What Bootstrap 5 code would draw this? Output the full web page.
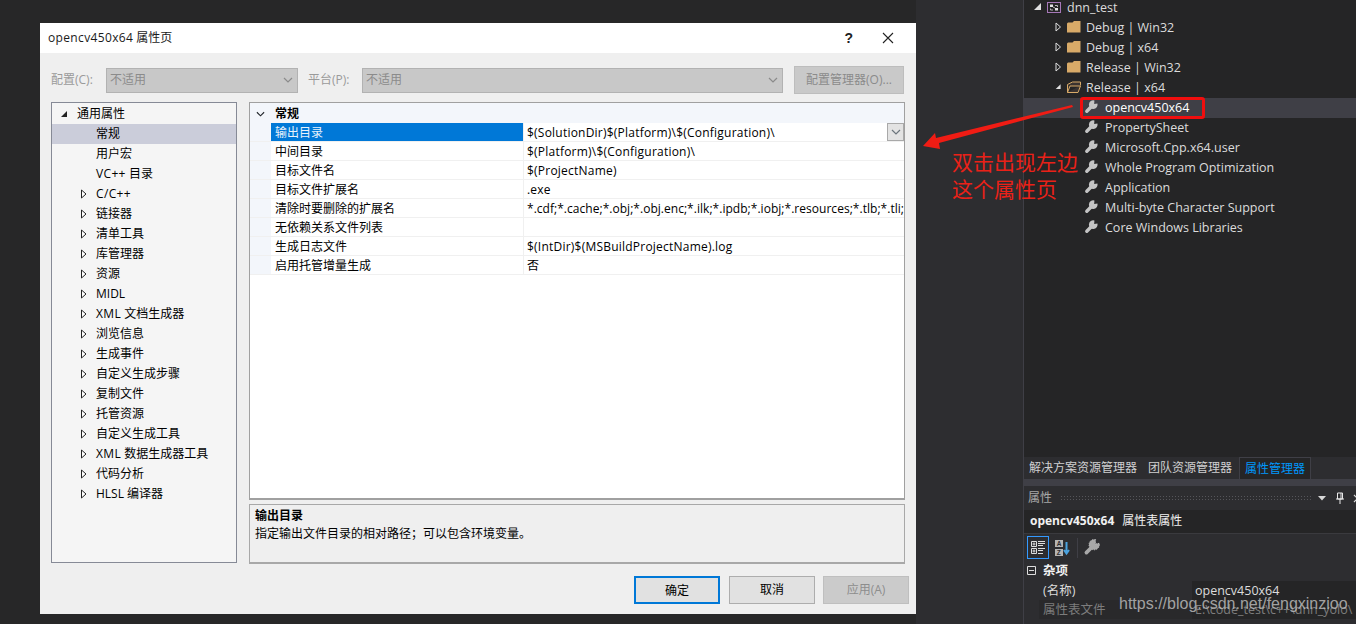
<!doctype html>
<html lang="zh">
<head>
<meta charset="utf-8">
<title>opencv450x64 属性页</title>
<link href="https://cdn.jsdelivr.net/npm/bootstrap@5.3.0/dist/css/bootstrap.min.css" rel="stylesheet">
<style>
html,body{height:624px;overflow:hidden}
body{background:#2d2d30;font:12px/1.2 "Open Sans","Noto Sans CJK SC",sans-serif;color:#000}
.stage{width:1356px;height:624px;position:relative}
.desk{width:1023px;background:#2d2d30}
.desk-left{width:916px;height:624px;background:#272728;padding:23px 0 10px 40px}
.dlg{width:876px;height:591px;background:#efefef}
.dlg-title{height:30px;background:#fff;padding:0 8px;color:#1a1a1a}
.lat{letter-spacing:.35px}
.dlg-help{font:700 14px "Liberation Sans",sans-serif;margin-right:29px;color:#222}
.dlg-x{margin-right:14px}
.cfg{height:28px;margin:13px 12px 0 11px;color:#9a9a9a}
.cfg-lab{width:55px}
.cfg-lab2{width:54px;margin-left:10px}
.cfg-sel{height:25px;background:#c8c8c8;border:1px solid #b2b2b2;padding:0 4px 0 3px;color:#8b8b8b}
.sel-a{width:192px}.sel-b{width:421px}
.cfg-btn{width:110px;height:28px;margin-left:11px;background:#c9c9c9;border:1px solid #bdbdbd;color:#8b8b8b}
.mainrow{height:462px;margin:8px 11px 0 11px;gap:12px}
.navtree{width:186px;height:461px;background:#f5f5f5;border:1px solid #868a96;padding-top:1px}
.ti{height:20px;width:184px;white-space:nowrap}
.ti-r{padding-left:9px}.ti-r svg{margin-right:9px}
.ti-c{padding-left:44px}
.ti-p{padding-left:29px}.ti-p svg{margin-right:9px}
.ti-on{background:#cbcdda}
.grid-col{width:656px}
.pgrid{height:398px;background:#fff;border:1px solid #a0a0a0;border-bottom-width:2px}
.pg-h{height:20px;background:#f3f6fb;font-weight:700;padding:2px 0 0 6px}
.pg-h svg{margin-right:10px}
.pg-row{height:19px;border-bottom:1px solid #f0f0f0;white-space:nowrap}
.pg-gut{width:21px;height:100%;background:#f3f6fb;flex:none}
.pg-n{width:253px;height:100%;padding:2px 0 0 4px;flex:none;border-right:1px solid #f0f0f0}
.pg-sel{background:#0078d7;color:#e8f2fb}
.pg-v{padding:2px 0 0 3px;overflow:hidden;flex:1;height:100%;position:relative;letter-spacing:.22px}
.pg-v0{letter-spacing:.03px}
.pg-dd{position:absolute;right:0;top:0;width:17px;height:18px;background:#e3e3e3;border:1px solid #a9a9a9}
.pdesc{height:60px;margin-top:4px;border:1px solid #a8a8a8;border-bottom-width:2px;padding:2px 5px;line-height:18px;background:#efefef}
.dlg-foot{margin:12px 7px 0 0;gap:8px}
.wbtn{width:86px;height:28px;background:#e1e1e1;border:1px solid #adadad;text-align:center;line-height:24px;padding:0;border-radius:0;font-size:12px;color:#000}
.wbtn-def{border:2px solid #0078d7;line-height:23px;margin-right:1px}
.wbtn-off{background:#cbcbcb;border-color:#bfbfbf;color:#8d8d8d}
.side{width:333px;height:624px;background:#252526;border-left:1px solid #3f3f46;color:#dcdcdc;font-size:12.5px}
.st{height:20px;white-space:nowrap;padding-bottom:2px}
.st-top{height:18px;padding:0 0 4px 9px}
.st-top svg{margin-right:4px}
.st-top span{margin-left:2px}
.st-f{padding-left:31px}.st-f svg{margin-right:5px}
.st-w{padding-left:60px}.st-w svg{margin-right:7px}
.st-sel{background:#3f3f46;color:#fff}
.sidetree{height:457px}
.tabs{height:22px;background:#2d2d30;font-size:12px}
.stab{padding:0 5px;line-height:22px;color:#d0d0d0;margin-right:1px}
.stab-on{background:#252526;color:#0097fb;border:1px solid #3f3f46;border-bottom:0;line-height:21px;height:22px;margin-left:1px}
.tabgap{height:7px;background:#3f3f46}
.props{height:138px;background:#2d2d30}
.pr-title{height:24px;padding:0 4px;color:#a8a8a8;font-size:12px}
.pr-grip{height:7px;margin:0 7px 0 8px;background-image:radial-gradient(#55555a 0.8px,transparent 0.9px);background-size:3px 3px}
.pr-x{margin-right:-10px}
.pr-sub{height:23px;background:#252526;padding-left:6px;font-size:12px;color:#f1f1f1}
.pr-tool{height:28px;background:#2d2d30;padding-left:3px;gap:4px;border-top:1px solid #3a3a3e}
.pr-ic{width:22px;height:23px;border:1px solid transparent}
.pr-ic-on{border-color:#3399ff}
.pr-ic-w{width:18px}
.pr-vsep{width:1px;height:20px;background:#3f3f46;margin:0 1px 0 2px}
.pr-row{height:19px;white-space:nowrap}
.pr-cat{padding-left:3px;font-weight:700;color:#f1f1f1}
.pr-cat svg{margin-right:7px}
.pr-n{width:168px;padding-left:19px;height:100%;line-height:19px}
.pr-v{flex:1;background:#252526;height:100%;padding-left:3px;line-height:19px;overflow:hidden}
.pr-name{margin-top:1px}
.pr-dim{color:#7d7d7d;background:#29292b;margin-left:15px}
.pr-dim .pr-n{width:153px;padding-left:4px}
.sorttxt{font:700 6.500px "Liberation Sans",sans-serif;fill:#2d2d30}
.note-svg{position:absolute;left:0;top:0;pointer-events:none}
.note-box{position:absolute;left:1080px;top:97px;width:125px;height:22px;border:3px solid #f00e0e;border-radius:3px}
.note-txt{position:absolute;left:952px;top:148px;font:21px/27px "Noto Sans CJK SC",sans-serif;color:#ea2118}
.wm{position:absolute;left:1119px;top:595px;font:16px "Liberation Sans",sans-serif;color:rgba(195,195,195,.8);white-space:nowrap}
</style>
</head>
<body>
<svg width="0" height="0" class="d-none">
<symbol id="t-o" viewBox="0 0 6 10"><path d="M.5 1 L5 5 L.5 9 Z" fill="#fff" stroke="#222" stroke-width="1"/></symbol>
<symbol id="t-d" viewBox="0 0 7 7"><path d="M0 6 L6 6 L6 0 Z" fill="#222"/></symbol>
<symbol id="t-od" viewBox="0 0 7 10"><path d="M1 1 L5.500 5 L1 9 Z" fill="none" stroke="#e0e0e0" stroke-width="1"/></symbol>
<symbol id="t-dd" viewBox="0 0 10 10"><path d="M1 8 L8 8 L8 1 Z" fill="#e0e0e0"/></symbol>
<symbol id="wr" viewBox="0 0 14 14"><path d="M10.400 .5 A4.300 4.300 0 1 0 13.400 3.600 L10.200 4 Z" fill="#c4c4c4"/><path d="M2.800 11.200 L7 7" stroke="#c4c4c4" stroke-width="3.400" stroke-linecap="round"/></symbol>
<symbol id="fo" viewBox="0 0 14 12"><path d="M0 2.500 L1 1.500 L5.500 1.500 L7 0 L13.500 0 L13.500 11.500 L0 11.500 Z" fill="#d8aa68"/></symbol>
<symbol id="fo2" viewBox="0 0 14 12"><path d="M.5 11.500 L.5 3.500 L5.500 1 L13.500 1 L13.500 4.500 M.5 11.500 L11 11.500 L13.500 5 L3 5 Z" fill="#3a3330" stroke="#d8aa68" stroke-width="1"/></symbol>
<symbol id="chev" viewBox="0 0 10 7"><path d="M1 1 L5 5 L9 1" fill="none" stroke="currentColor" stroke-width="1.200"/></symbol>
</svg>

<div class="stage d-flex">
  <div class="desk d-flex">
    <div class="desk-left">
      <div class="dlg d-flex flex-column">
        <div class="dlg-title d-flex align-items-center">
          <span class="me-auto"><span class="lat">opencv450x64</span> 属性页</span>
          <span class="dlg-help">?</span>
          <svg class="dlg-x" width="12" height="12" viewBox="0 0 12 12"><path d="M1 1 L11 11 M11 1 L1 11" stroke="#222" stroke-width="1.100"/></svg>
        </div>
        <div class="cfg d-flex align-items-center">
          <span class="cfg-lab">配置(C):</span>
          <div class="cfg-sel sel-a d-flex align-items-center justify-content-between"><span>不适用</span><svg width="10" height="7"><use href="#chev"/></svg></div>
          <span class="cfg-lab2">平台(P):</span>
          <div class="cfg-sel sel-b d-flex align-items-center justify-content-between"><span>不适用</span><svg width="10" height="7"><use href="#chev"/></svg></div>
          <div class="cfg-btn d-flex align-items-center justify-content-center">配置管理器(O)...</div>
        </div>
        <div class="mainrow d-flex">
          <div class="navtree">
            <div class="ti ti-r d-flex align-items-center"><svg width="7" height="7"><use href="#t-d"/></svg>通用属性</div>
            <div class="ti ti-c ti-on d-flex align-items-center">常规</div>
            <div class="ti ti-c d-flex align-items-center">用户宏</div>
            <div class="ti ti-c d-flex align-items-center"><span><span class="lat">VC++</span> 目录</span></div>
            <div class="ti ti-p d-flex align-items-center"><svg width="6" height="10"><use href="#t-o"/></svg><span class="lat">C/C++</span></div>
            <div class="ti ti-p d-flex align-items-center"><svg width="6" height="10"><use href="#t-o"/></svg>链接器</div>
            <div class="ti ti-p d-flex align-items-center"><svg width="6" height="10"><use href="#t-o"/></svg>清单工具</div>
            <div class="ti ti-p d-flex align-items-center"><svg width="6" height="10"><use href="#t-o"/></svg>库管理器</div>
            <div class="ti ti-p d-flex align-items-center"><svg width="6" height="10"><use href="#t-o"/></svg>资源</div>
            <div class="ti ti-p d-flex align-items-center"><svg width="6" height="10"><use href="#t-o"/></svg>MIDL</div>
            <div class="ti ti-p d-flex align-items-center"><svg width="6" height="10"><use href="#t-o"/></svg><span><span class="lat">XML</span> 文档生成器</span></div>
            <div class="ti ti-p d-flex align-items-center"><svg width="6" height="10"><use href="#t-o"/></svg>浏览信息</div>
            <div class="ti ti-p d-flex align-items-center"><svg width="6" height="10"><use href="#t-o"/></svg>生成事件</div>
            <div class="ti ti-p d-flex align-items-center"><svg width="6" height="10"><use href="#t-o"/></svg>自定义生成步骤</div>
            <div class="ti ti-p d-flex align-items-center"><svg width="6" height="10"><use href="#t-o"/></svg>复制文件</div>
            <div class="ti ti-p d-flex align-items-center"><svg width="6" height="10"><use href="#t-o"/></svg>托管资源</div>
            <div class="ti ti-p d-flex align-items-center"><svg width="6" height="10"><use href="#t-o"/></svg>自定义生成工具</div>
            <div class="ti ti-p d-flex align-items-center"><svg width="6" height="10"><use href="#t-o"/></svg><span><span class="lat">XML</span> 数据生成器工具</span></div>
            <div class="ti ti-p d-flex align-items-center"><svg width="6" height="10"><use href="#t-o"/></svg>代码分析</div>
            <div class="ti ti-p d-flex align-items-center"><svg width="6" height="10"><use href="#t-o"/></svg>HLSL 编译器</div>
          </div>
          <div class="grid-col">
            <div class="pgrid">
              <div class="pg-h d-flex align-items-center"><svg width="9" height="7" class="text-dark"><use href="#chev"/></svg>常规</div>
              <div class="pg-row d-flex align-items-center"><div class="pg-gut"></div><div class="pg-n pg-sel d-flex align-items-center">输出目录</div><div class="pg-v d-flex align-items-center">$(SolutionDir)$(Platform)\$(Configuration)\<div class="pg-dd d-flex align-items-center justify-content-center"><svg width="10" height="7" class="text-secondary"><use href="#chev"/></svg></div></div></div>
              <div class="pg-row d-flex align-items-center"><div class="pg-gut"></div><div class="pg-n d-flex align-items-center">中间目录</div><div class="pg-v d-flex align-items-center">$(Platform)\$(Configuration)\</div></div>
              <div class="pg-row d-flex align-items-center"><div class="pg-gut"></div><div class="pg-n d-flex align-items-center">目标文件名</div><div class="pg-v d-flex align-items-center">$(ProjectName)</div></div>
              <div class="pg-row d-flex align-items-center"><div class="pg-gut"></div><div class="pg-n d-flex align-items-center">目标文件扩展名</div><div class="pg-v d-flex align-items-center">.exe</div></div>
              <div class="pg-row d-flex align-items-center"><div class="pg-gut"></div><div class="pg-n d-flex align-items-center">清除时要删除的扩展名</div><div class="pg-v pg-v0 d-flex align-items-center">*.cdf;*.cache;*.obj;*.obj.enc;*.ilk;*.ipdb;*.iobj;*.resources;*.tlb;*.tli;*.t</div></div>
              <div class="pg-row d-flex align-items-center"><div class="pg-gut"></div><div class="pg-n d-flex align-items-center">无依赖关系文件列表</div><div class="pg-v d-flex align-items-center"></div></div>
              <div class="pg-row d-flex align-items-center"><div class="pg-gut"></div><div class="pg-n d-flex align-items-center">生成日志文件</div><div class="pg-v d-flex align-items-center">$(IntDir)$(MSBuildProjectName).log</div></div>
              <div class="pg-row d-flex align-items-center"><div class="pg-gut"></div><div class="pg-n d-flex align-items-center">启用托管增量生成</div><div class="pg-v d-flex align-items-center">否</div></div>
            </div>
            <div class="pdesc"><div class="fw-bold">输出目录</div><div>指定输出文件目录的相对路径；可以包含环境变量。</div></div>
          </div>
        </div>
        <div class="dlg-foot d-flex justify-content-end">
          <button type="button" class="btn wbtn wbtn-def">确定</button>
          <button type="button" class="btn wbtn">取消</button>
          <button type="button" class="btn wbtn wbtn-off">应用(A)</button>
        </div>
      </div>
    </div>
  </div>
  <div class="side">
    <div class="sidetree">
      <div class="st st-top d-flex align-items-center"><svg width="10" height="10"><use href="#t-dd"/></svg><svg width="14" height="11" viewBox="0 0 14 11"><rect x=".5" y=".5" width="13" height="10" fill="none" stroke="#a678b8"/><path d="M3 2.500h3v2.500H3zM8 6h3v2.500H8z" fill="#e4e4e4"/><path d="M6 5l2 1M8 3.500h2.500V5M3.500 6.500v1.500H6" fill="none" stroke="#b8b8b8"/></svg><span>dnn_test</span></div>
      <div class="st st-f d-flex align-items-center"><svg width="7" height="10"><use href="#t-od"/></svg><svg width="14" height="12"><use href="#fo"/></svg>Debug | Win32</div>
      <div class="st st-f d-flex align-items-center"><svg width="7" height="10"><use href="#t-od"/></svg><svg width="14" height="12"><use href="#fo"/></svg>Debug | x64</div>
      <div class="st st-f d-flex align-items-center"><svg width="7" height="10"><use href="#t-od"/></svg><svg width="14" height="12"><use href="#fo"/></svg>Release | Win32</div>
      <div class="st st-f d-flex align-items-center"><svg width="7" height="10"><use href="#t-dd"/></svg><svg width="14" height="12"><use href="#fo2"/></svg>Release | x64</div>
      <div class="st st-w st-sel d-flex align-items-center"><svg width="14" height="14"><use href="#wr"/></svg>opencv450x64</div>
      <div class="st st-w d-flex align-items-center"><svg width="14" height="14"><use href="#wr"/></svg>PropertySheet</div>
      <div class="st st-w d-flex align-items-center"><svg width="14" height="14"><use href="#wr"/></svg>Microsoft.Cpp.x64.user</div>
      <div class="st st-w d-flex align-items-center"><svg width="14" height="14"><use href="#wr"/></svg>Whole Program Optimization</div>
      <div class="st st-w d-flex align-items-center"><svg width="14" height="14"><use href="#wr"/></svg>Application</div>
      <div class="st st-w d-flex align-items-center"><svg width="14" height="14"><use href="#wr"/></svg>Multi-byte Character Support</div>
      <div class="st st-w d-flex align-items-center"><svg width="14" height="14"><use href="#wr"/></svg>Core Windows Libraries</div>
    </div>
    <div class="tabs d-flex">
      <div class="stab">解决方案资源管理器</div>
      <div class="stab">团队资源管理器</div>
      <div class="stab stab-on">属性管理器</div>
    </div>
    <div class="tabgap"></div>
    <div class="props">
      <div class="pr-title d-flex align-items-center"><span>属性</span><div class="pr-grip flex-grow-1"></div>
        <svg width="9" height="5" viewBox="0 0 9 5" class="me-2"><path d="M0 0h8L4 4.500z" fill="#d8d8d8"/></svg>
        <svg width="10" height="12" viewBox="0 0 10 12" class="me-2"><path d="M2.500 1h5v6h-5zM1 7h8M5 7v5M6 1v6" fill="none" stroke="#e8e8e8"/></svg>
        <svg class="pr-x" width="9" height="9" viewBox="0 0 9 9"><path d="M1 1l7 7M8 1l-7 7" stroke="#d8d8d8" stroke-width="1.200"/></svg>
      </div>
      <div class="pr-sub d-flex align-items-center"><strong>opencv450x64</strong><span class="ms-2">属性表属性</span></div>
      <div class="pr-tool d-flex align-items-center">
        <div class="pr-ic pr-ic-on d-flex align-items-center justify-content-center"><svg width="15" height="15" viewBox="0 0 15 15"><path d="M.5 1.500h5v5h-5zM.5 8.500h5v5h-5zM1.500 4h3M3 2.500v3M1.500 11h3M3 9.500v3" fill="none" stroke="#ddd"/><path d="M7 1.500h7M7 3.500h7M7 5.500h5M7 8.500h7M7 10.500h5M7 13.500h5" stroke="#ddd"/></svg></div>
        <div class="pr-ic pr-ic-w d-flex align-items-center justify-content-center"><svg width="15" height="16" viewBox="0 0 15 16"><rect x="0" y="0" width="8" height="7" fill="#b4b4b4"/><rect x="0" y="9" width="8" height="7" fill="#b4b4b4"/><text class="sorttxt" x="1.800" y="6">A</text><text class="sorttxt" x="1.800" y="15">Z</text><path d="M11.500 2v11M9 10l2.500 3.500L14 10" fill="none" stroke="#4aa3e0" stroke-width="2"/></svg></div>
        <div class="pr-vsep"></div>
        <svg width="17" height="17" viewBox="0 0 14 14"><path d="M10.400 .5 A4.300 4.300 0 1 0 13.400 3.600 L10.200 4 Z" fill="#a8a8a8" stroke="#d0d0d0" stroke-width=".6" stroke-dasharray="1 1"/><path d="M2.800 11.200 L7 7" stroke="#a8a8a8" stroke-width="3" stroke-linecap="round"/></svg>
      </div>
      <div class="pr-row pr-cat d-flex align-items-center"><svg width="9" height="9" viewBox="0 0 9 9"><path d="M.5.500h8v8h-8zM2 4.500h5" fill="none" stroke="#ddd"/></svg>杂项</div>
      <div class="pr-row pr-name d-flex align-items-center"><div class="pr-n">(名称)</div><div class="pr-v">opencv450x64</div></div>
      <div class="pr-row pr-dim d-flex align-items-center"><div class="pr-n">属性表文件</div><div class="pr-v">E:\code_test\c++\dnn_yolo\</div></div>
    </div>
  </div>
  <svg class="note-svg" width="1356" height="624"><path d="M923 146 L935 133 L936 138 L1072 105 L1073 107 L939 143 L940 149 Z" fill="#f01c14"/></svg>
  <div class="note-box"></div>
  <div class="note-txt">双击出现左边<br>这个属性页</div>
  <div class="wm">https://blog.csdn.net/fengxinzioo</div>
</div>
</body>
</html>
